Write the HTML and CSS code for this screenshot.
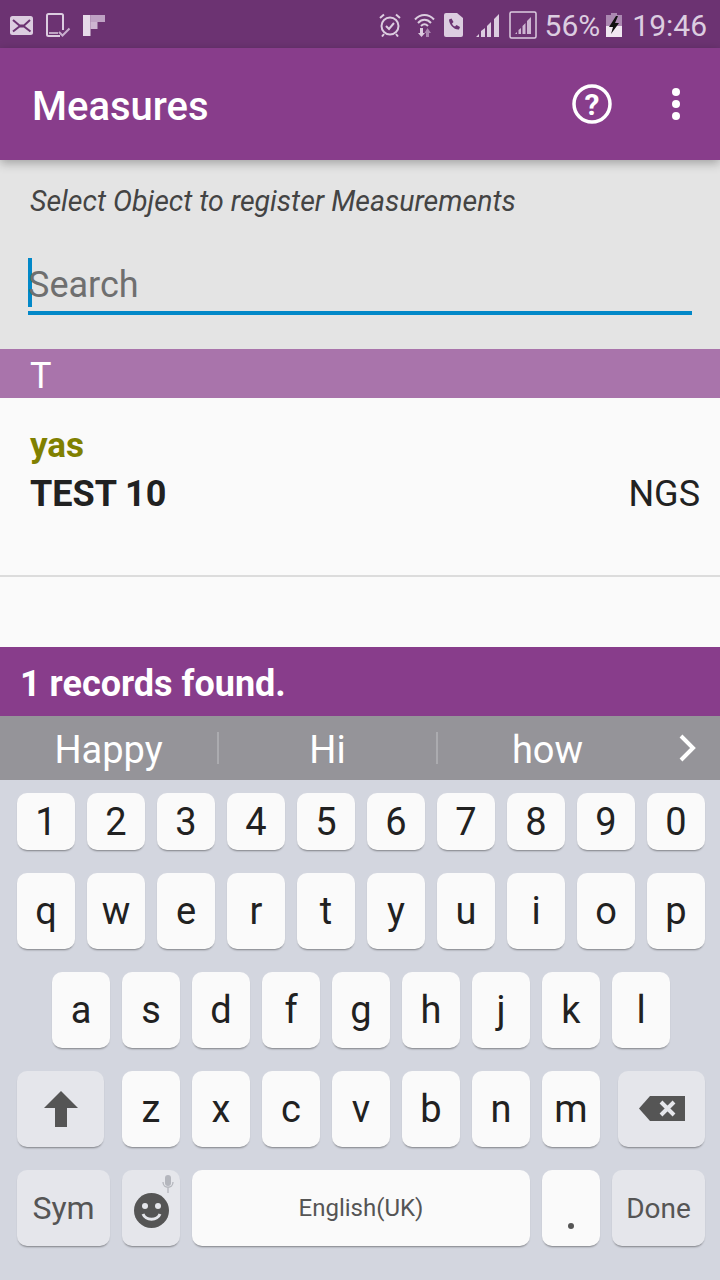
FILE: index.html
```html
<!DOCTYPE html>
<html lang="en">
<head>
    <meta charset="UTF-8">
    <meta name="viewport" content="width=device-width, initial-scale=1.0">
    <title>Measures</title>
    <link rel="stylesheet" href="styles.css">
</head>
<body>

    <div class="statusbar">
        <div class="status-left">
            <svg class="ic-mail" width="23" height="19" viewBox="0 0 23 19"><rect width="23" height="19" rx="2.500" fill="#dccde0"/><path d="M3 4l6.500 5.500h4.500L20 4M3 15.500l6.500-5h4.500l6.500 5" fill="none" stroke="#6c3372" stroke-width="2"/></svg>
            <svg class="ic-device" width="25" height="25" viewBox="0 0 25 25"><path d="M14 23H2.500A1.500 1.500 0 0 1 1 21.500V2.500A1.500 1.500 0 0 1 2.500 1h13A1.500 1.500 0 0 1 17 2.500V17" fill="none" stroke="#dccde0" stroke-width="2"/><path d="M3 20h9" stroke="#dccde0" stroke-width="1.500"/><path d="M13 19l3.500 3.500 7-7" fill="none" stroke="#c9afce" stroke-width="2"/></svg>
            <svg class="ic-flip" width="22" height="22" viewBox="0 0 22 22"><path d="M0 1h7.500v21H0z" fill="#e6dae9"/><path d="M7.500 1H22v7H7.500z" fill="#bfa2c4"/><path d="M7.500 8h7v7h-7z" fill="#cdb5d1"/></svg>
        </div>
        <div class="status-right">
            <svg class="ic-alarm" width="22" height="24" viewBox="0 0 22 24"><circle cx="11" cy="13" r="8.500" fill="none" stroke="#dccde0" stroke-width="2"/><path d="M7 13l3 3 5-6M1 5l4-3.500M21 5l-4-3.500M5 21l-2 2.500M17 21l2 2.500" fill="none" stroke="#dccde0" stroke-width="2"/></svg>
            <svg class="ic-wifi" width="21" height="24" viewBox="0 0 21 24"><path d="M1 6.500c5.500-6 13.500-6 19 0M4 10c4-4.200 9-4.200 13 0M7 13c2.200-2.200 4.800-2.200 7 0" fill="none" stroke="#dccde0" stroke-width="2"/><path d="M6 15h3v5h2l-3.500 4L4 20h2z" fill="#dccde0"/><path d="M12 20h3v4h-3zM10.500 20l3-5 3.500 5z" fill="#ab88b1"/></svg>
            <svg class="ic-sim" width="19" height="24" viewBox="0 0 19 24"><path d="M2 0h11l6 5v17a2 2 0 0 1-2 2H2a2 2 0 0 1-2-2V2a2 2 0 0 1 2-2z" fill="#dccde0"/><path d="M5 6.500l2.500-1 2 3.500-1.500 1.500c.5 1.500 1.500 2.500 3 3l1.500-1.500 3.500 2-1 2.500c-5 .5-10-5-10-10z" fill="#6c3372"/></svg>
            <svg class="ic-signal" width="24" height="24" viewBox="0 0 24 24"><path d="M0 24l3-3v3zM5 24v-6l4-3v9zM11 24V13l4-4v15zM18 24V6l5-5v23z" fill="#dccde0"/></svg>
            <svg class="ic-signal-box" width="28" height="28" viewBox="0 0 28 28"><rect x="1" y="1" width="26" height="26" rx="1.500" fill="none" stroke="#dccde0" stroke-width="1.500"/><path d="M6 23l2-2v2zM9.500 23v-4l2.500-2v6zM13.500 23v-8l3-3v11zM18 23V10l4-4v17z" fill="#cdb5d1"/></svg>
            <span class="status-pct">56%</span>
            <svg class="ic-battery" width="16" height="24" viewBox="0 0 16 24"><path d="M5 0h6v2h5v11H0V2h5z" fill="#ab88b1"/><path d="M0 13h16v11H0z" fill="#f0e8f1"/><path d="M10 3L3 14h4l-2 7 8-11H9l3-7z" fill="#111"/></svg>
            <span class="status-time">19:46</span>
        </div>
    </div>

    <div class="appbar">
        <h1 class="appbar-title">Measures</h1>
        <svg class="ic-help" width="40" height="40" viewBox="0 0 40 40"><circle cx="20" cy="20" r="18" fill="none" stroke="#fff" stroke-width="3.500"/><text x="20" y="31" text-anchor="middle" class="help-mark">?</text></svg>
        <div class="overflow"><span></span><span></span><span></span></div>
    </div>

    <div class="search-area">
        <p class="hint">Select Object to register Measurements</p>
        <div class="search-box">
            <span class="cursor"></span>
            <span class="placeholder">Search</span>
        </div>
    </div>

    <div class="section-head">T</div>

    <div class="list">
        <div class="row">
            <div class="row-owner">yas</div>
            <div class="row-line">
                <span class="row-name">TEST 10</span>
                <span class="row-code">NGS</span>
            </div>
        </div>
    </div>

    <div class="footer">1 records found.</div>

    <div class="suggestions">
        <span class="word">Happy</span>
        <span class="word">Hi</span>
        <span class="word last">how</span>
        <svg class="chevron" width="18" height="30" viewBox="0 0 18 30"><path d="M3 3l12 12L3 27" fill="none" stroke="#fff" stroke-width="4"/></svg>
    </div>

    <div class="keyboard">
        <div class="keys keys-num">
            <div class="key">1</div><div class="key">2</div><div class="key">3</div><div class="key">4</div><div class="key">5</div>
            <div class="key">6</div><div class="key">7</div><div class="key">8</div><div class="key">9</div><div class="key">0</div>
        </div>
        <div class="keys">
            <div class="key">q</div><div class="key">w</div><div class="key">e</div><div class="key">r</div><div class="key">t</div>
            <div class="key">y</div><div class="key">u</div><div class="key">i</div><div class="key">o</div><div class="key">p</div>
        </div>
        <div class="keys">
            <div class="key">a</div><div class="key">s</div><div class="key">d</div><div class="key">f</div><div class="key">g</div>
            <div class="key">h</div><div class="key">j</div><div class="key">k</div><div class="key">l</div>
        </div>
        <div class="keys">
            <div class="key key-fn key-wide key-shift">
                <svg width="34" height="36" viewBox="0 0 34 36"><path d="M17 0l17 17H23v19H11V17H0z" fill="#555"/></svg>
            </div>
            <div class="key">z</div><div class="key">x</div><div class="key">c</div><div class="key">v</div>
            <div class="key">b</div><div class="key">n</div><div class="key">m</div>
            <div class="key key-fn key-wide key-back">
                <svg width="46" height="26" viewBox="0 0 46 26"><path d="M11 0h35v25H11L0 12.500z" fill="#555"/><path d="M22 6l13 13M35 6L22 19" stroke="#e5e6eb" stroke-width="4"/></svg>
            </div>
        </div>
        <div class="keys">
            <div class="key key-fn key-side key-sym">Sym</div>
            <div class="key key-fn key-emoji">
                <svg class="ic-mic" width="12" height="18" viewBox="0 0 12 18"><rect x="3" y="0" width="6" height="11" rx="3" fill="#b4b6bd"/><path d="M1 7c0 7 10 7 10 0M6 13v5" fill="none" stroke="#b4b6bd" stroke-width="1.300"/></svg>
                <svg class="ic-smile" width="35" height="35" viewBox="0 0 35 35"><circle cx="17.500" cy="17.500" r="17.500" fill="#555"/><circle cx="11" cy="13" r="3" fill="#e5e6eb"/><circle cx="24" cy="13" r="3" fill="#e5e6eb"/><path d="M9 21c3 7 14 7 17 0" fill="none" stroke="#e5e6eb" stroke-width="3"/></svg>
            </div>
            <div class="key key-space">English(UK)</div>
            <div class="key key-dot"><span class="dot"></span></div>
            <div class="key key-fn key-side key-done">Done</div>
        </div>
    </div>

</body>
</html>
```

FILE: styles.css
```css
* {
    box-sizing: border-box;
}

html, body {
    margin: 0;
    padding: 0;
}

body {
    width: 720px;
    height: 1280px;
    overflow: hidden;
    font-family: Roboto, "Liberation Sans", sans-serif;
    background-color: #d3d6df;
}

svg {
    display: block;
    flex: none;
}

.statusbar {
    height: 48px;
    padding-top: 2px;
    background-color: #6c3372;
    display: flex;
    justify-content: space-between;
    align-items: center;
    color: #dccde0;
}

.status-left {
    display: flex;
    align-items: center;
    padding-left: 10px;
}

.ic-device {
    margin-left: 13px;
}

.ic-flip {
    margin-left: 12px;
}

.status-right {
    display: flex;
    align-items: center;
    padding-right: 13px;
}

.ic-wifi {
    margin-left: 13px;
}

.ic-sim {
    margin-left: 9px;
}

.ic-signal {
    margin-left: 13px;
}

.ic-signal-box {
    margin-left: 9px;
}

.status-pct {
    font-size: 30px;
    margin-left: 8px;
}

.ic-battery {
    margin-left: 6px;
}

.status-time {
    font-size: 30px;
    margin-left: 10px;
}

.appbar {
    height: 112px;
    background-color: #883d8b;
    display: flex;
    align-items: center;
    padding: 0 40px 0 32px;
    box-shadow: 0 3px 10px rgba(0, 0, 0, 0.3);
    position: relative;
}

.appbar-title {
    margin: 0;
    padding-top: 4px;
    flex: 1;
    font-size: 40px;
    font-weight: 500;
    color: #fff;
}

.help-mark {
    font-family: Roboto, sans-serif;
    font-size: 30px;
    font-weight: 700;
    fill: #fff;
}

.ic-help {
    margin-right: 60px;
}

.overflow {
    display: flex;
    flex-direction: column;
    gap: 4px;
}

.overflow span {
    width: 8px;
    height: 8px;
    border-radius: 50%;
    background-color: #fff;
}

.search-area {
    height: 189px;
    background-color: #e4e4e4;
    padding: 25px 28px 0;
}

.hint {
    margin: 0 0 0 2px;
    font-size: 28.500px;
    line-height: 34px;
    font-style: italic;
    color: #444;
}

.search-box {
    margin-top: 39px;
    height: 57px;
    border-bottom: 4px solid #0288c8;
    display: flex;
    align-items: flex-start;
}

.cursor {
    width: 4px;
    height: 49px;
    background-color: #0288c8;
    margin-right: -4px;
}

.placeholder {
    font-size: 36px;
    line-height: 55px;
    color: #6f6f6f;
}

.section-head {
    height: 49px;
    background-color: #a974ab;
    color: #fff;
    font-size: 36px;
    line-height: 54px;
    padding-left: 30px;
}

.list {
    height: 249px;
    background-color: #fafafa;
}

.row {
    height: 179px;
    border-bottom: 2px solid #dcdcdc;
    padding: 28px 20px 0 30px;
}

.row-owner {
    font-size: 35px;
    line-height: 40px;
    font-weight: 700;
    color: #808000;
}

.row-line {
    display: flex;
    justify-content: space-between;
    align-items: baseline;
    line-height: 56px;
    color: #212121;
}

.row-name {
    font-size: 36px;
    font-weight: 700;
}

.row-code {
    font-size: 36px;
}

.footer {
    height: 69px;
    background-color: #883d8b;
    color: #fff;
    font-size: 36px;
    font-weight: 700;
    line-height: 74px;
    padding-left: 20px;
}

.suggestions {
    height: 64px;
    background-color: #959499;
    display: flex;
    align-items: center;
}

.word {
    width: 219px;
    height: 32px;
    padding-top: 4px;
    display: flex;
    align-items: center;
    justify-content: center;
    border-right: 2px solid #ababaf;
    color: #fff;
    font-size: 38px;
}

.word.last {
    border-right: none;
}

.chevron {
    margin-left: 21px;
}

.keyboard {
    height: 500px;
    padding: 13px 0 0 2px;
    display: flex;
    flex-direction: column;
    gap: 23px;
}

.keys {
    display: flex;
    justify-content: center;
    gap: 12px;
    height: 76px;
}

.keys-num {
    height: 57px;
}

.key {
    width: 58px;
    border-radius: 10px;
    background-color: #fafafa;
    box-shadow: 0 2px 2px -1px rgba(0, 0, 0, 0.4);
    display: flex;
    align-items: center;
    justify-content: center;
    font-size: 38px;
    color: #212121;
    position: relative;
}

.key-fn {
    background-color: #e5e6eb;
    color: #555;
}

.key-wide {
    width: 87px;
}

.key-shift {
    margin-right: 6px;
}

.key-back {
    margin-left: 6px;
}

.key-side {
    width: 93px;
}

.key-sym {
    font-size: 32px;
}

.key-done {
    font-size: 28px;
}

.key-space {
    width: 338px;
    font-size: 24px;
    color: #555;
}

.key-dot {
    align-items: flex-end;
    padding-bottom: 17px;
}

.dot {
    width: 6px;
    height: 6px;
    border-radius: 50%;
    background-color: #555;
}

.ic-mic {
    position: absolute;
    top: 5px;
    right: 6px;
}

.ic-smile {
    margin-top: 5px;
}
```
